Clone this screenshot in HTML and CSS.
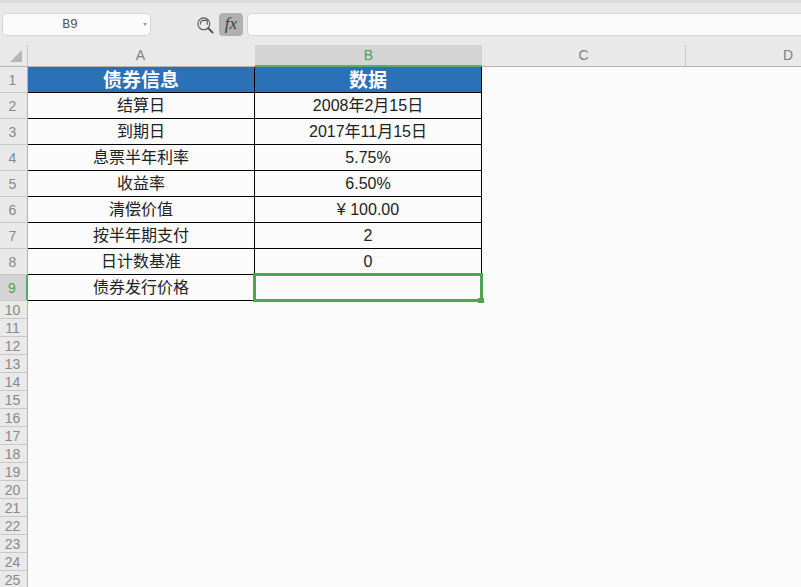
FILE: index.html
```html
<!DOCTYPE html>
<html lang="zh-CN">
<head>
    <meta charset="UTF-8">
    <title>债券发行价格</title>
    <link rel="stylesheet" href="styles.css">
</head>
<body>
    <div class="formula-bar">
        <div class="name-box">
            <span class="name-text">B9</span>
            <span class="name-arrow"></span>
        </div>
        <svg class="zoom-icon" width="17" height="17" viewBox="0 0 20 20" fill="none" stroke="#555" stroke-width="1.3">
            <circle cx="8" cy="8" r="7"/>
            <path d="M4 9 A4 4 0 0 1 8 4 H12 V9"/>
            <path d="M13 13 L19 19" stroke-width="2.4"/>
        </svg>
        <div class="fx-button">fx</div>
        <div class="formula-input"></div>
    </div>

    <div class="col-heads">
        <div class="corner"><span class="corner-mark"></span></div>
        <div class="col-head col-wide col-a">A</div>
        <div class="col-head col-wide col-active">B</div>
        <div class="col-head col-c">C</div>
        <div class="col-head col-d">D</div>
    </div>

    <div class="sheet">
        <div class="row-heads">
            <div class="row-head row-tall">1</div>
            <div class="row-head row-tall">2</div>
            <div class="row-head row-tall">3</div>
            <div class="row-head row-tall">4</div>
            <div class="row-head row-tall">5</div>
            <div class="row-head row-tall">6</div>
            <div class="row-head row-tall">7</div>
            <div class="row-head row-tall">8</div>
            <div class="row-head row-tall row-active">9</div>
            <div class="row-head">10</div>
            <div class="row-head">11</div>
            <div class="row-head">12</div>
            <div class="row-head">13</div>
            <div class="row-head">14</div>
            <div class="row-head">15</div>
            <div class="row-head">16</div>
            <div class="row-head">17</div>
            <div class="row-head">18</div>
            <div class="row-head">19</div>
            <div class="row-head">20</div>
            <div class="row-head">21</div>
            <div class="row-head">22</div>
            <div class="row-head">23</div>
            <div class="row-head">24</div>
            <div class="row-head">25</div>
        </div>
        <div class="table">
            <div class="cell cell-title">债券信息</div>
            <div class="cell cell-title">数据</div>
            <div class="cell">结算日</div>
            <div class="cell">2008年2月15日</div>
            <div class="cell">到期日</div>
            <div class="cell">2017年11月15日</div>
            <div class="cell">息票半年利率</div>
            <div class="cell">5.75%</div>
            <div class="cell">收益率</div>
            <div class="cell">6.50%</div>
            <div class="cell">清偿价值</div>
            <div class="cell">¥ 100.00</div>
            <div class="cell">按半年期支付</div>
            <div class="cell">2</div>
            <div class="cell">日计数基准</div>
            <div class="cell">0</div>
            <div class="cell">债券发行价格</div>
            <div class="cell cell-selected"><span class="fill-handle"></span></div>
        </div>
    </div>
</body>
</html>
```

FILE: styles.css
```css
html, body {
    margin: 0;
    height: 587px;
    overflow: hidden;
}
body {
    font-family: "Liberation Sans", "Noto Sans CJK SC", sans-serif;
    background-color: #fbfbfb;
    color: #222;
}
.formula-bar {
    box-sizing: border-box;
    height: 45px;
    padding: 10px 0 0 2px;
    display: flex;
    align-items: flex-start;
    background-color: #e9e9e9;
    border-top: 3px solid #dcdcdc;
}
.name-box {
    box-sizing: border-box;
    width: 149px;
    height: 23px;
    margin-right: 46px;
    display: flex;
    align-items: center;
    background-color: #fbfbfb;
    border: 1px solid #d6d6d6;
    border-radius: 5px;
}
.name-text {
    flex: 1;
    text-align: center;
    font-family: "Liberation Mono", monospace;
    font-size: 13px;
    color: #555;
    padding-right: 6px;
}
.name-arrow {
    width: 0;
    height: 0;
    margin-right: 3px;
    border-left: 2.5px solid transparent;
    border-right: 2.5px solid transparent;
    border-top: 3px solid #999;
}
.zoom-icon {
    margin: 4px 5px 0 0;
}
.fx-button {
    box-sizing: border-box;
    width: 24px;
    height: 23px;
    margin-right: 4px;
    background-color: #b0b0b0;
    border-radius: 4px;
    text-align: center;
    font-family: "Liberation Serif", serif;
    font-style: italic;
    font-size: 17px;
    line-height: 22px;
    color: #3c3c3c;
}
.formula-input {
    flex: 1;
    height: 23px;
    box-sizing: border-box;
    background-color: #fbfbfb;
    border: 1px solid #d6d6d6;
    border-right: none;
    border-radius: 5px 0 0 5px;
}
.col-heads {
    display: flex;
    height: 22px;
    box-sizing: border-box;
    background-color: #e9e9e9;
    border-bottom: 1px solid #b4b4b4;
}
.corner {
    box-sizing: border-box;
    width: 28px;
    border-right: 1px solid #c8c8c8;
    position: relative;
}
.corner-mark {
    position: absolute;
    right: 5px;
    bottom: 4px;
    width: 0;
    height: 0;
    border-left: 12px solid transparent;
    border-bottom: 12px solid #b5b5b5;
}
.col-head {
    box-sizing: border-box;
    text-align: center;
    font-size: 14px;
    line-height: 21px;
    color: #808080;
}
.col-wide {
    width: 227px;
}
.col-a {
    padding-right: 2px;
}
.col-active {
    height: 22px;
    background-color: #d4d4d4;
    color: #4fa154;
    border-bottom: 2px solid #5cab62;
}
.col-c {
    width: 204px;
    border-right: 1px solid #c8c8c8;
}
.col-d {
    width: 115px;
    padding-left: 89px;
}
.sheet {
    display: flex;
}
.row-heads {
    box-sizing: border-box;
    width: 28px;
    flex-shrink: 0;
    background-color: #e9e9e9;
    border-right: 1px solid #b4b4b4;
}
.row-head {
    box-sizing: border-box;
    height: 18px;
    padding-right: 2px;
    text-align: center;
    font-size: 14px;
    line-height: 18px;
    color: #888;
    border-bottom: 1px solid #c8c8c8;
}
.row-tall {
    height: 26px;
    line-height: 26px;
}
.row-active {
    background-color: #d4d4d4;
    color: #4fa154;
    border-right: 2px solid #5cab62;
    width: 28px;
}
.table {
    display: grid;
    grid-template-columns: 227px 227px;
    grid-auto-rows: 26px;
    align-self: flex-start;
}
.cell {
    box-sizing: border-box;
    text-align: center;
    font-size: 16px;
    line-height: 25px;
    color: #222;
    border-right: 1px solid #000;
    border-bottom: 1px solid #000;
}
.cell-title {
    background-color: #2b71b8;
    color: #fff;
    font-size: 19px;
    font-weight: bold;
    line-height: 27px;
}
.cell-selected {
    position: relative;
}
.cell-selected::before {
    content: "";
    position: absolute;
    left: -2px;
    top: -2px;
    width: 230px;
    height: 29px;
    box-sizing: border-box;
    border: 3px solid #4ea44f;
}
.fill-handle {
    position: absolute;
    right: -3px;
    bottom: -3px;
    width: 6px;
    height: 5px;
    background-color: #4ea44f;
}
```
